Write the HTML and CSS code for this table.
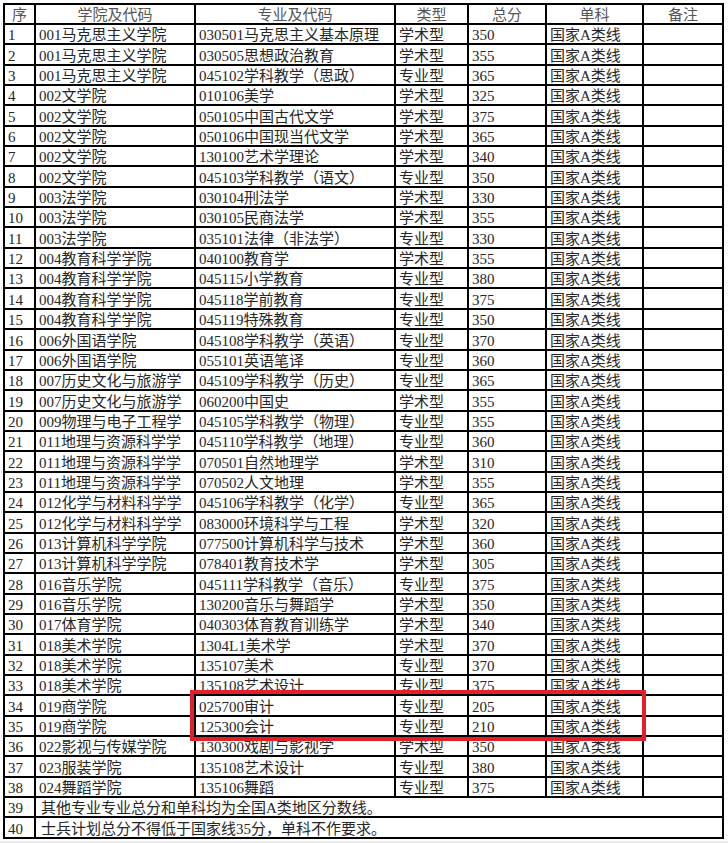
FILE: index.html
```html
<!DOCTYPE html>
<html lang="zh-CN">
<head>
<meta charset="utf-8">
<title>分数线</title>
<link rel="stylesheet" href="styles.css">
</head>
<body>
<div class="page">
<table class="grid">
<colgroup>
<col class="c-no"><col class="c-school"><col class="c-major"><col class="c-type"><col class="c-score"><col class="c-single"><col class="c-note">
</colgroup>
<thead>
<tr class="head"><th>序</th><th>学院及代码</th><th>专业及代码</th><th>类型</th><th>总分</th><th>单科</th><th>备注</th></tr>
</thead>
<tbody>
<tr><td>1</td><td>001马克思主义学院</td><td>030501马克思主义基本原理</td><td>学术型</td><td>350</td><td>国家A类线</td><td></td></tr>
<tr><td>2</td><td>001马克思主义学院</td><td>030505思想政治教育</td><td>学术型</td><td>355</td><td>国家A类线</td><td></td></tr>
<tr><td>3</td><td>001马克思主义学院</td><td>045102学科教学（思政）</td><td>专业型</td><td>365</td><td>国家A类线</td><td></td></tr>
<tr><td>4</td><td>002文学院</td><td>010106美学</td><td>学术型</td><td>325</td><td>国家A类线</td><td></td></tr>
<tr><td>5</td><td>002文学院</td><td>050105中国古代文学</td><td>学术型</td><td>375</td><td>国家A类线</td><td></td></tr>
<tr><td>6</td><td>002文学院</td><td>050106中国现当代文学</td><td>学术型</td><td>365</td><td>国家A类线</td><td></td></tr>
<tr><td>7</td><td>002文学院</td><td>130100艺术学理论</td><td>学术型</td><td>340</td><td>国家A类线</td><td></td></tr>
<tr><td>8</td><td>002文学院</td><td>045103学科教学（语文）</td><td>专业型</td><td>350</td><td>国家A类线</td><td></td></tr>
<tr><td>9</td><td>003法学院</td><td>030104刑法学</td><td>学术型</td><td>330</td><td>国家A类线</td><td></td></tr>
<tr><td>10</td><td>003法学院</td><td>030105民商法学</td><td>学术型</td><td>355</td><td>国家A类线</td><td></td></tr>
<tr><td>11</td><td>003法学院</td><td>035101法律（非法学）</td><td>专业型</td><td>330</td><td>国家A类线</td><td></td></tr>
<tr><td>12</td><td>004教育科学学院</td><td>040100教育学</td><td>学术型</td><td>355</td><td>国家A类线</td><td></td></tr>
<tr><td>13</td><td>004教育科学学院</td><td>045115小学教育</td><td>专业型</td><td>380</td><td>国家A类线</td><td></td></tr>
<tr><td>14</td><td>004教育科学学院</td><td>045118学前教育</td><td>专业型</td><td>375</td><td>国家A类线</td><td></td></tr>
<tr><td>15</td><td>004教育科学学院</td><td>045119特殊教育</td><td>专业型</td><td>350</td><td>国家A类线</td><td></td></tr>
<tr><td>16</td><td>006外国语学院</td><td>045108学科教学（英语）</td><td>专业型</td><td>370</td><td>国家A类线</td><td></td></tr>
<tr><td>17</td><td>006外国语学院</td><td>055101英语笔译</td><td>专业型</td><td>360</td><td>国家A类线</td><td></td></tr>
<tr><td>18</td><td>007历史文化与旅游学</td><td>045109学科教学（历史）</td><td>专业型</td><td>365</td><td>国家A类线</td><td></td></tr>
<tr><td>19</td><td>007历史文化与旅游学</td><td>060200中国史</td><td>学术型</td><td>355</td><td>国家A类线</td><td></td></tr>
<tr><td>20</td><td>009物理与电子工程学</td><td>045105学科教学（物理）</td><td>专业型</td><td>355</td><td>国家A类线</td><td></td></tr>
<tr><td>21</td><td>011地理与资源科学学</td><td>045110学科教学（地理）</td><td>专业型</td><td>360</td><td>国家A类线</td><td></td></tr>
<tr><td>22</td><td>011地理与资源科学学</td><td>070501自然地理学</td><td>学术型</td><td>310</td><td>国家A类线</td><td></td></tr>
<tr><td>23</td><td>011地理与资源科学学</td><td>070502人文地理</td><td>学术型</td><td>355</td><td>国家A类线</td><td></td></tr>
<tr><td>24</td><td>012化学与材料科学学</td><td>045106学科教学（化学）</td><td>专业型</td><td>365</td><td>国家A类线</td><td></td></tr>
<tr><td>25</td><td>012化学与材料科学学</td><td>083000环境科学与工程</td><td>学术型</td><td>320</td><td>国家A类线</td><td></td></tr>
<tr><td>26</td><td>013计算机科学学院</td><td>077500计算机科学与技术</td><td>学术型</td><td>360</td><td>国家A类线</td><td></td></tr>
<tr><td>27</td><td>013计算机科学学院</td><td>078401教育技术学</td><td>学术型</td><td>305</td><td>国家A类线</td><td></td></tr>
<tr><td>28</td><td>016音乐学院</td><td>045111学科教学（音乐）</td><td>专业型</td><td>375</td><td>国家A类线</td><td></td></tr>
<tr><td>29</td><td>016音乐学院</td><td>130200音乐与舞蹈学</td><td>学术型</td><td>350</td><td>国家A类线</td><td></td></tr>
<tr><td>30</td><td>017体育学院</td><td>040303体育教育训练学</td><td>学术型</td><td>340</td><td>国家A类线</td><td></td></tr>
<tr><td>31</td><td>018美术学院</td><td>1304L1美术学</td><td>学术型</td><td>370</td><td>国家A类线</td><td></td></tr>
<tr><td>32</td><td>018美术学院</td><td>135107美术</td><td>专业型</td><td>370</td><td>国家A类线</td><td></td></tr>
<tr><td>33</td><td>018美术学院</td><td>135108艺术设计</td><td>专业型</td><td>375</td><td>国家A类线</td><td></td></tr>
<tr><td>34</td><td>019商学院</td><td>025700审计</td><td>专业型</td><td>205</td><td>国家A类线</td><td></td></tr>
<tr><td>35</td><td>019商学院</td><td>125300会计</td><td>专业型</td><td>210</td><td>国家A类线</td><td></td></tr>
<tr><td>36</td><td>022影视与传媒学院</td><td>130300戏剧与影视学</td><td>学术型</td><td>350</td><td>国家A类线</td><td></td></tr>
<tr><td>37</td><td>023服装学院</td><td>135108艺术设计</td><td>专业型</td><td>380</td><td>国家A类线</td><td></td></tr>
<tr><td>38</td><td>024舞蹈学院</td><td>135106舞蹈</td><td>专业型</td><td>375</td><td>国家A类线</td><td></td></tr>
<tr><td>39</td><td colspan="6" class="note">其他专业专业总分和单科均为全国A类地区分数线。</td></tr>
<tr><td>40</td><td colspan="6" class="note">士兵计划总分不得低于国家线35分，单科不作要求。</td></tr>
</tbody>
</table>
<div class="highlight"></div>
</div>
</body>
</html>
```
FILE: styles.css
```css
html {
  background: #ebebeb;
}
body {
  margin: 0;
}
.page {
  position: relative;
  background: #fff;
  width: 728px;
  padding: 3px 0 2px 3px;
  box-sizing: border-box;
}
.grid {
  border-collapse: collapse;
  table-layout: fixed;
  width: 721px;
  font-family: "Liberation Serif", "Noto Sans CJK SC", serif;
  font-size: 15px;
  line-height: 14px;
  color: #262626;
}
.c-no { width: 31px; }
.c-school { width: 160px; }
.c-major { width: 200px; }
.c-type { width: 73px; }
.c-score { width: 78px; }
.c-single { width: 97px; }
.c-note { width: 80px; }
.grid th,
.grid td {
  border: 2px solid #000;
  padding: 0 0 1px 3px;
  height: 17.35px;
  line-height: 14px;
  vertical-align: bottom;
  white-space: nowrap;
  overflow: hidden;
  text-align: left;
}
.grid .head th {
  height: 17px;
  font-weight: normal;
  text-align: center;
  color: #555;
  padding: 0 0 1px 0;
}
.grid td.note {
  padding-left: 5px;
}
.highlight {
  position: absolute;
  left: 190px;
  top: 690px;
  width: 456px;
  height: 51px;
  box-sizing: border-box;
  border: 4px solid #e3202a;
}
```
